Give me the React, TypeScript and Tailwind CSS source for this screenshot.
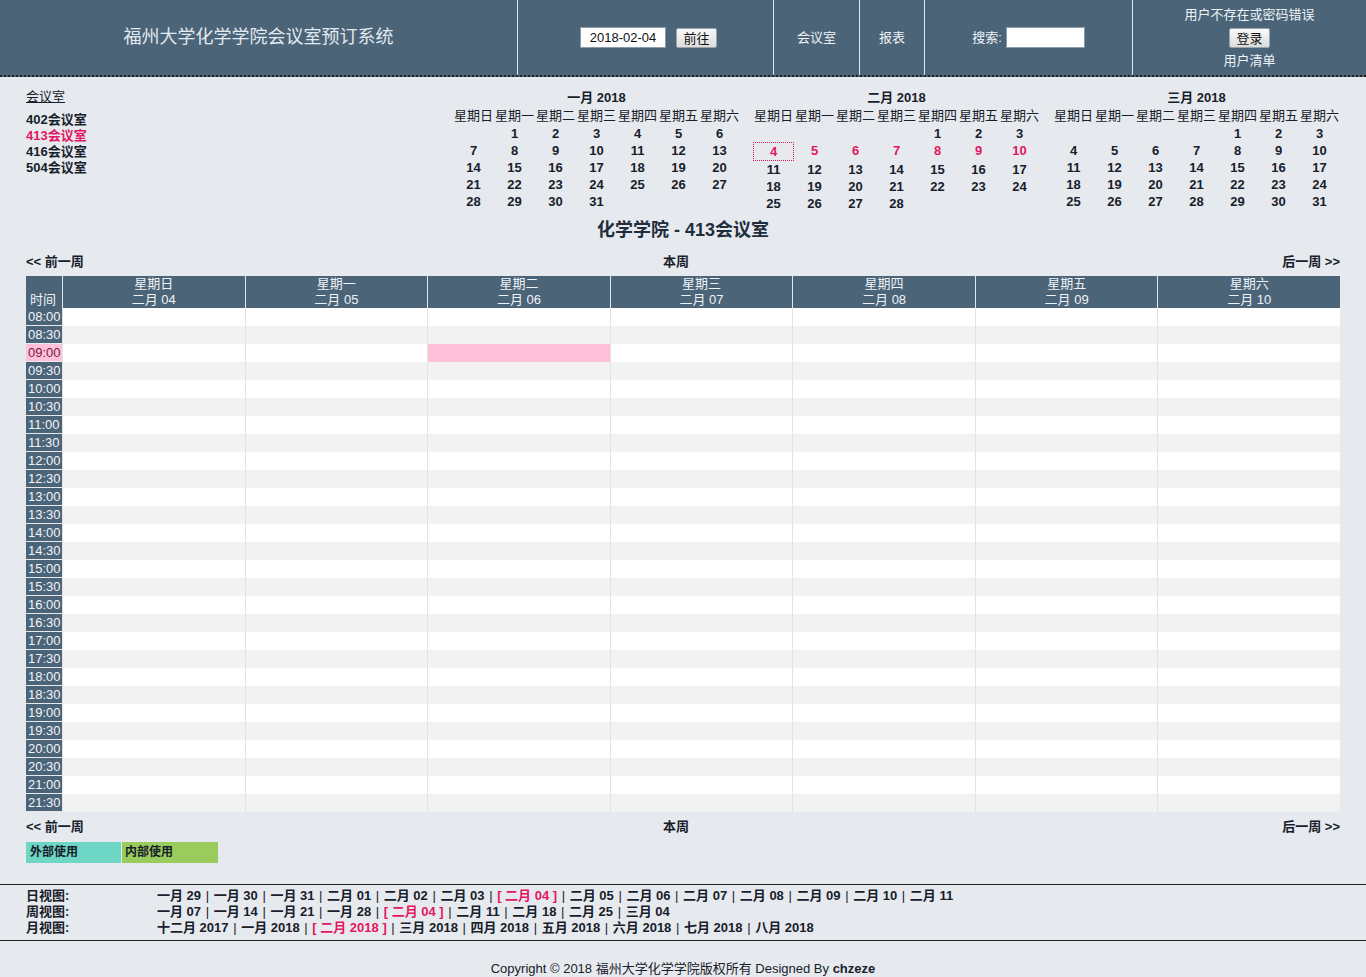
import React from 'react';

const weekdays = ['星期日', '星期一', '星期二', '星期三', '星期四', '星期五', '星期六'];

const months = [
  { title: '一月 2018', offset: 1, days: 31 },
  { title: '二月 2018', offset: 4, days: 28, current: true },
  { title: '三月 2018', offset: 4, days: 31 },
];

const rooms = [
  { name: '402会议室' },
  { name: '413会议室', active: true },
  { name: '416会议室' },
  { name: '504会议室' },
];

const days = [
  { w: '星期日', d: '二月 04' },
  { w: '星期一', d: '二月 05' },
  { w: '星期二', d: '二月 06' },
  { w: '星期三', d: '二月 07' },
  { w: '星期四', d: '二月 08' },
  { w: '星期五', d: '二月 09' },
  { w: '星期六', d: '二月 10' },
];

const times: string[] = [];
for (let h = 8; h <= 21; h++) {
  const hh = h < 10 ? `0${h}` : `${h}`;
  times.push(`${hh}:00`, `${hh}:30`);
}

const dayLinks = ['一月 29', '一月 30', '一月 31', '二月 01', '二月 02', '二月 03', '[ 二月 04 ]', '二月 05', '二月 06', '二月 07', '二月 08', '二月 09', '二月 10', '二月 11'];
const weekLinks = ['一月 07', '一月 14', '一月 21', '一月 28', '[ 二月 04 ]', '二月 11', '二月 18', '二月 25', '三月 04'];
const monthLinks = ['十二月 2017', '一月 2018', '[ 二月 2018 ]', '三月 2018', '四月 2018', '五月 2018', '六月 2018', '七月 2018', '八月 2018'];

function buildWeeks(offset: number, total: number) {
  const cells: (number | null)[] = [];
  for (let i = 0; i < offset; i++) cells.push(null);
  for (let d = 1; d <= total; d++) cells.push(d);
  while (cells.length % 7) cells.push(null);
  const weeks: (number | null)[][] = [];
  for (let i = 0; i < cells.length; i += 7) weeks.push(cells.slice(i, i + 7));
  return weeks;
}

const MonthCal = ({ title, offset, days: total, current }: { title: string; offset: number; days: number; current?: boolean }) => {
  const weeks = buildWeeks(offset, total);
  return (
    <div className="w-[287px]">
      <div className="h-[18px] leading-[18px] text-center font-bold">{title}</div>
      <div className="grid grid-cols-7 h-[18px] leading-[18px]">
        {weekdays.map((w) => (
          <div key={w} className="text-center whitespace-nowrap">{w}</div>
        ))}
      </div>
      {weeks.map((week, wi) => (
        <div key={wi} className="grid grid-cols-7">
          {week.map((d, di) => {
            const hot = current && d !== null && d >= 4 && d <= 10;
            const sel = current && d === 4;
            return (
              <div
                key={di}
                className={`text-center font-bold leading-[17px] ${hot ? 'text-[#e3175f]' : ''} ${sel ? 'border border-dotted border-[#e3175f]' : ''}`}
              >
                {d ?? ''}
              </div>
            );
          })}
        </div>
      ))}
    </div>
  );
};

const LinkRow = ({ label, items }: { label: string; items: string[] }) => (
  <div className="flex h-[16px] leading-[16px]">
    <div className="w-[131px] font-bold">{label}</div>
    <div className="whitespace-nowrap font-bold">
      {items.map((it, i) => (
        <span key={it}>
          {i > 0 && <span className="px-[1px] font-normal"> | </span>}
          <span className={it.startsWith('[') ? 'text-[#e3175f]' : ''}>{it}</span>
        </span>
      ))}
    </div>
  </div>
);

const WeekNav = () => (
  <div className="grid grid-cols-3 h-[16px] leading-[16px] font-bold">
    <div>&lt;&lt; 前一周</div>
    <div className="text-center pr-[14px]">本周</div>
    <div className="text-right">后一周 &gt;&gt;</div>
  </div>
);

export default function App() {
  return (
    <div className="min-h-[977px] w-full bg-[#e6eaee] text-[13px] text-[#17202a] font-['Liberation_Sans','Noto_Sans_CJK_SC',sans-serif]">
      {/* header */}
      <header className="flex h-[77px] bg-[#4b6478] border-b-2 border-dotted border-[#222] text-[#eef3f7]">
        <div className="w-[517px] flex items-center justify-center text-[18px] text-[#e2eaf1]">
          福州大学化学学院会议室预订系统
        </div>
        <div className="w-[256px] border-l border-[#dfe7ee] flex items-center justify-center gap-[10px] pl-[6px]">
          <input
            readOnly
            value="2018-02-04"
            className="w-[86px] h-[21px] bg-white text-[#111] text-[13px] text-center outline-none border border-[#8a9aa8]"
          />
          <button className="w-[41px] h-[20px] text-[13px] text-[#111] bg-gradient-to-b from-[#fafafa] to-[#dcdcdc] border border-[#9aa4ad] rounded-[2px]">
            前往
          </button>
        </div>
        <div className="w-[86px] border-l border-[#dfe7ee] flex items-center justify-center">会议室</div>
        <div className="w-[65px] border-l border-[#dfe7ee] flex items-center justify-center">报表</div>
        <div className="w-[208px] border-l border-[#dfe7ee] flex items-center justify-center gap-[4px]">
          <span>搜索:</span>
          <input readOnly className="w-[79px] h-[21px] bg-white outline-none border border-[#8a9aa8]" />
        </div>
        <div className="flex-1 border-l border-[#dfe7ee] flex flex-col items-center pt-[6px]">
          <div className="h-[18px] leading-[18px]">用户不存在或密码错误</div>
          <button className="mt-[4px] w-[41px] h-[20px] text-[13px] text-[#111] bg-gradient-to-b from-[#fafafa] to-[#dcdcdc] border border-[#9aa4ad] rounded-[2px]">
            登录
          </button>
          <div className="h-[18px] leading-[18px] mt-[4px]">用户清单</div>
        </div>
      </header>

      <main className="px-[26px]">
        {/* rooms + calendars */}
        <div className="flex justify-between pt-[12px]">
          <div className="pt-[1px]">
            <div className="h-[14px] leading-[14px] underline">会议室</div>
            <div className="mt-[8px] font-bold leading-[16px]">
              {rooms.map((r) => (
                <div key={r.name} className={r.active ? 'text-[#e3175f]' : ''}>{r.name}</div>
              ))}
            </div>
          </div>
          <div className="flex gap-[13px]">
            {months.map((m) => (
              <MonthCal key={m.title} {...m} />
            ))}
          </div>
        </div>

        <div className="mt-[7px] h-[22px] leading-[22px] text-center text-[18px] font-bold text-[#1f2d3d]">
          化学学院 - 413会议室
        </div>

        <div className="mt-[13px]">
          <WeekNav />
        </div>

        {/* week grid */}
        <div className="mt-[6px] grid grid-cols-[36px_repeat(7,1fr)]">
          <div className="h-[32px] bg-[#4b6478] text-[#eef3f7] flex items-end pl-[4px] leading-[16px]">时间</div>
          {days.map((d) => (
            <div key={d.d} className="h-[32px] bg-[#4b6478] text-[#eef3f7] border-l border-[#dfe7ee] text-center leading-[16px]">
              <div>{d.w}</div>
              <div>{d.d}</div>
            </div>
          ))}
          {times.map((t, ri) => {
            const shade = ri % 2 === 1 ? 'bg-[#f2f2f2]' : 'bg-white';
            const pinkTime = t === '09:00';
            return (
              <React.Fragment key={t}>
                <div
                  className={`h-[18px] pt-[1px] leading-[16px] pl-[2px] border-b border-[#e6eaee] ${pinkTime ? 'bg-[#ffc0da] text-[#7a1a3c]' : 'bg-[#4b6478] text-[#f1f5f8]'}`}
                >
                  {t}
                </div>
                {days.map((d, ci) => (
                  <div
                    key={d.d}
                    className={`h-[18px] border-l border-[#e1e3e5] ${pinkTime && ci === 2 ? 'bg-[#ffc0da]' : shade}`}
                  />
                ))}
              </React.Fragment>
            );
          })}
        </div>

        <div className="mt-[7px]">
          <WeekNav />
        </div>

        <div className="mt-[7px] flex h-[21px] font-bold text-[12px] leading-[21px]">
          <div className="w-[96px] bg-[#6dd6c4] pl-[4px] border-r border-[#e6eaee]">外部使用</div>
          <div className="w-[96px] bg-[#99cc5c] pl-[3px]">内部使用</div>
        </div>
      </main>

      {/* views */}
      <div className="mt-[21px] border-y border-[#222] pt-[3px] pb-[4px] px-[26px]">
        <LinkRow label="日视图:" items={dayLinks} />
        <LinkRow label="周视图:" items={weekLinks} />
        <LinkRow label="月视图:" items={monthLinks} />
      </div>

      <footer className="mt-[20px] h-[16px] leading-[16px] text-center">
        Copyright © 2018 福州大学化学学院版权所有 Designed By <b>chzeze</b>
      </footer>
    </div>
  );
}
